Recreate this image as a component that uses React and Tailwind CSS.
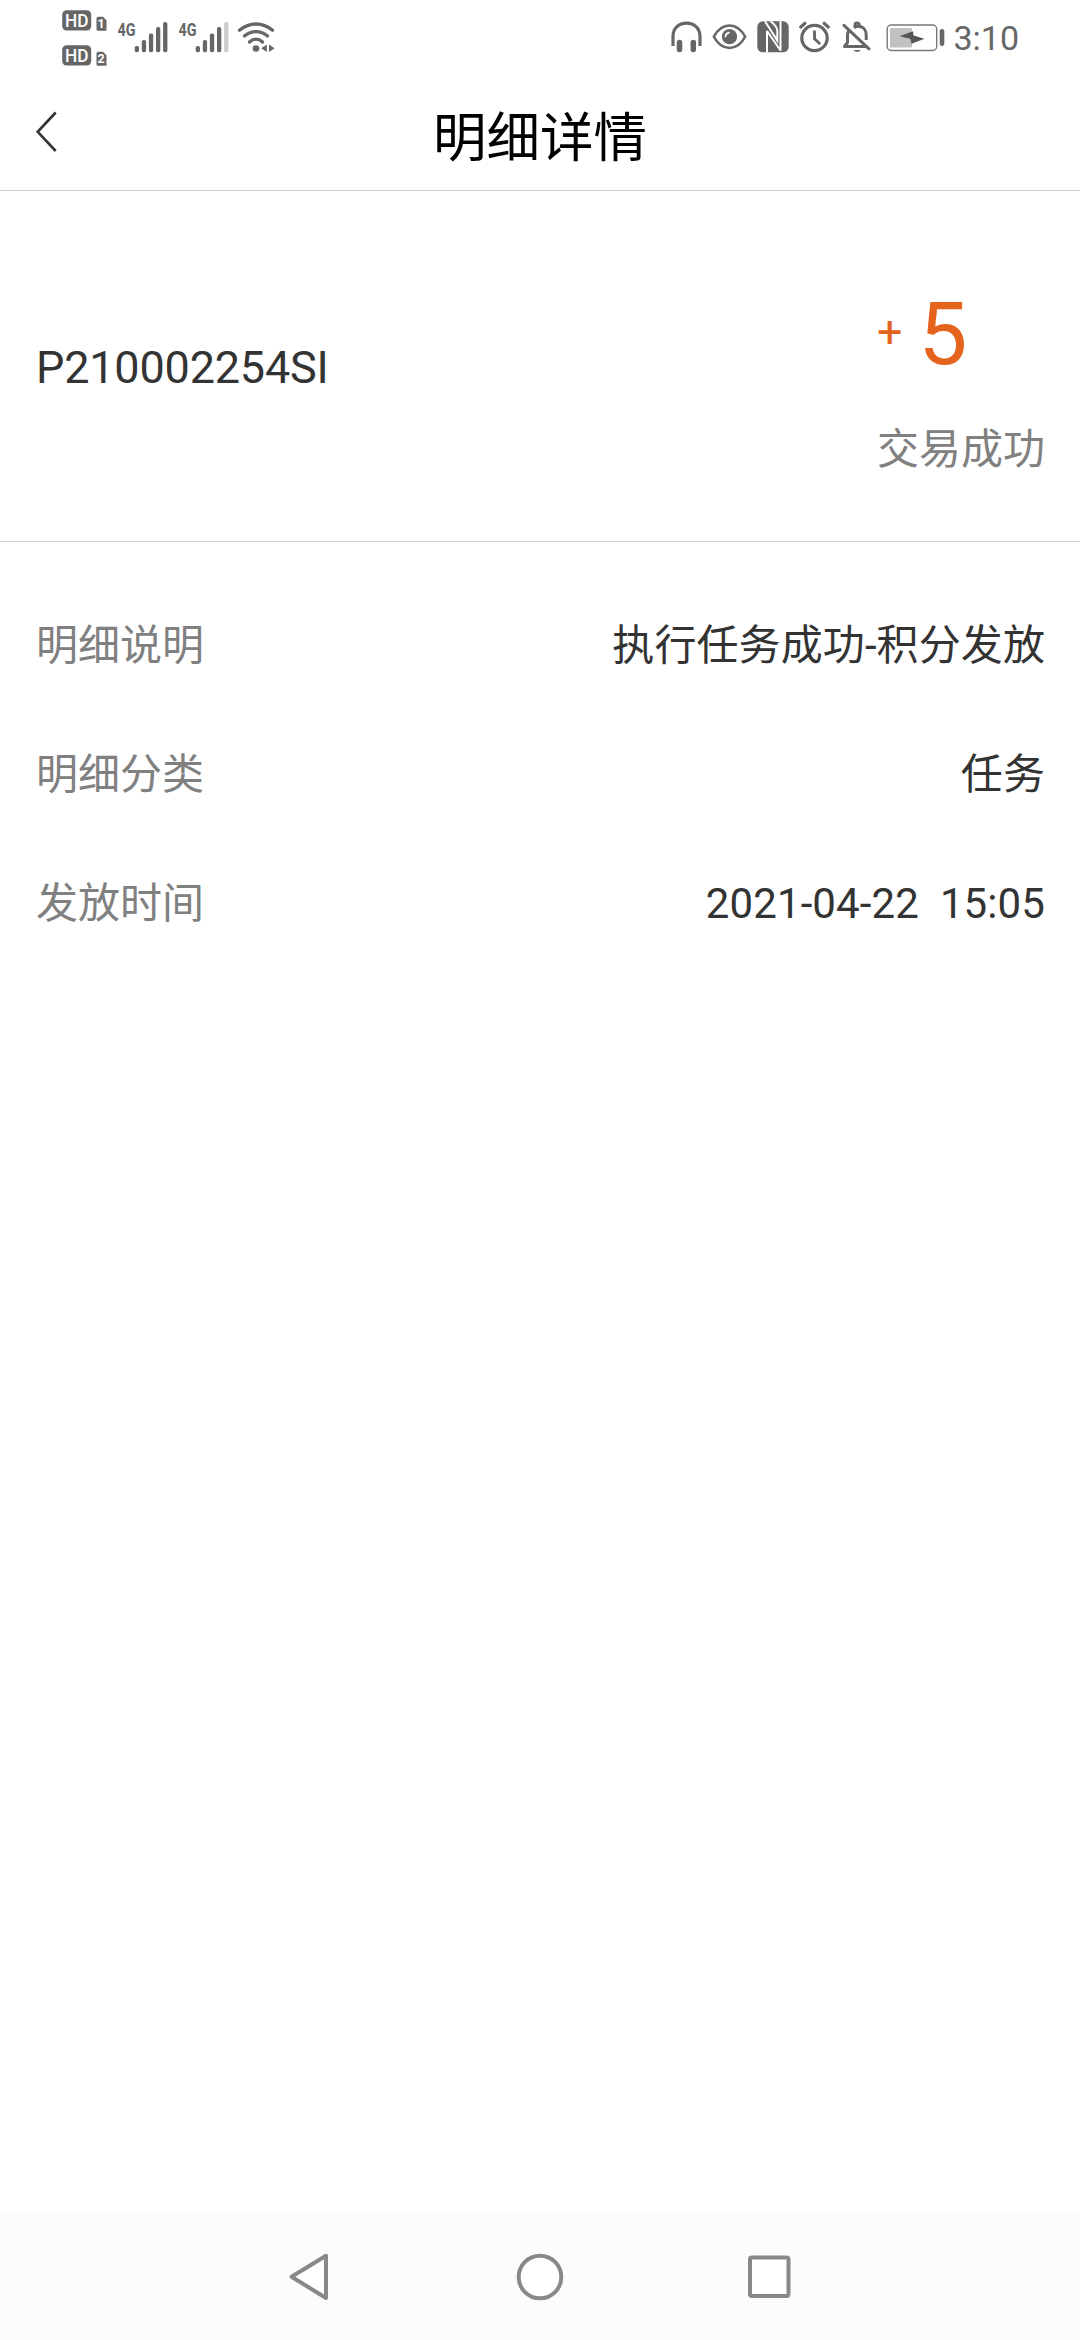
const rows = [
  { label: "明细说明", value: "执行任务成功-积分发放" },
  { label: "明细分类", value: "任务" },
  { label: "发放时间", value: "2021-04-22  15:05" }
];

export default function App() {
  return (
    <div className="flex h-[2340px] w-[1080px] flex-col overflow-hidden bg-white font-[Roboto,'Noto_Sans_CJK_SC',sans-serif] text-[#333333]">
      <StatusBar />
      <Header title="明细详情" />
      <Summary />
      <section className="flex flex-1 flex-col pt-[39px]">
        {rows.map((row) => (
          <div
            key={row.label}
            className="flex h-[129px] items-center justify-between pr-[35px] pl-9 text-[42px] leading-none"
          >
            <span className="text-[#808080]">{row.label}</span>
            <span className="whitespace-pre last:tracking-[0.1px]">{row.value}</span>
          </div>
        ))}
      </section>
      <NavBar />
    </div>
  );
}

function StatusBar() {
  return (
    <div className="flex h-[74px] shrink-0 items-start justify-between pr-[61px] pl-[62px] text-[#666666]">
      <div className="flex items-start">
        <div className="flex flex-col gap-[14px] pt-[10px]">
          <HdBadge sim="1" />
          <HdBadge sim="2" />
        </div>
        <Signal strength={5} className="ml-[10px]" />
        <Signal strength={4} className="ml-[7px]" />
        <WifiIcon />
      </div>
      <div className="flex items-start">
        <HeadphonesIcon />
        <EyeIcon />
        <NfcIcon />
        <AlarmIcon />
        <BellOffIcon />
        <BatteryIcon />
        <span className="mt-[18px] ml-[7px] text-[34px] leading-[40px]">3:10</span>
      </div>
    </div>
  );
}

function HdBadge({ sim }) {
  return (
    <svg width="46" height="21" viewBox="0 0 46 21" className="font-[Roboto,sans-serif]">
      <rect x="0.2" y="0.2" width="29" height="20.3" rx="4.5" fill="currentColor" />
      <text x="14.8" y="16.8" textAnchor="middle" fontSize="18" fontWeight="500" fill="#fff" textLength="23.5" lengthAdjust="spacingAndGlyphs">
        HD
      </text>
      <path d="M36 6.700h5l3.500 3.500v10.500h-8.500q-1.500 0-1.500-1.500v-11q0-1.500 1.500-1.500z" fill="currentColor" />
      <text x="39.2" y="18.2" textAnchor="middle" fontSize="12.5" fontWeight="700" fill="#fff">
        {sim}
      </text>
    </svg>
  );
}

function Signal({ strength, className }) {
  const tops = [46, 40, 33.5, 27, 22];
  return (
    <svg width="54" height="56" viewBox="0 0 54 56" className={className}>
      <text x="-0.5" y="35.5" fontSize="19" fontWeight="700" fill="currentColor" textLength="18" lengthAdjust="spacingAndGlyphs">
        4G
      </text>
      {tops.map((top, i) => (
        <rect
          key={top}
          x={16.7 + i * 7.1}
          y={top}
          width="4.3"
          height={52.3 - top}
          rx="1.8"
          fill={i < strength ? "currentColor" : "#cccccc"}
        />
      ))}
    </svg>
  );
}

function WifiIcon() {
  return (
    <svg width="40" height="56" viewBox="0 0 40 56" className="ml-[4px]" fill="none" stroke="currentColor" strokeWidth="3.3" strokeLinecap="round">
      <path d="M2.500 30.300Q10 24 19 24T35.500 30.300" />
      <path d="M7.500 36Q12.500 31.700 19 31.700T30.500 36" />
      <path d="M12.500 42Q15.500 39.200 19 39.200T25.500 42" />
      <circle cx="19" cy="48.5" r="3.3" fill="currentColor" stroke="none" />
      <path d="M29.800 44.500v7.500l-5.600-3.700z M32 44.500v7.500l5.600-3.700z" fill="currentColor" stroke="none" />
    </svg>
  );
}

function HeadphonesIcon() {
  return (
    <svg width="31" height="56" viewBox="0 0 31 56" fill="none" stroke="currentColor">
      <path d="M2 46V36.500C2 28 8 23.200 15.500 23.200S29 28 29 36.500V46" strokeWidth="3.2" />
      <path d="M8.500 42.500v7M22.300 42.500v7" strokeWidth="5.5" strokeLinecap="round" />
    </svg>
  );
}

function EyeIcon() {
  return (
    <svg width="35" height="56" viewBox="0 0 35 56" className="ml-[10px]">
      <path d="M1.800 36.700C6 29 11.500 25.500 17.500 25.500S29 29 33.200 36.700C29 44.500 23.500 48 17.500 48S6 44.500 1.800 36.700z" fill="none" stroke="currentColor" strokeWidth="2.5" strokeLinejoin="round" />
      <circle cx="17.5" cy="36.7" r="7.6" fill="currentColor" />
      <path d="M13.500 36.500Q13.900 33 17 32.600" fill="none" stroke="#fff" strokeWidth="1.7" strokeLinecap="round" />
    </svg>
  );
}

function NfcIcon() {
  return (
    <svg width="32" height="56" viewBox="0 0 32 56" className="ml-[10px]">
      <rect x="0.3" y="21.3" width="31.4" height="31" rx="5.5" fill="currentColor" />
      <g fill="none" stroke="#fff" strokeWidth="2">
        <path d="M8 21.300L20.300 40.500V31Q20 26 13.500 21.300" />
        <path d="M23.500 21.300V50.500L10 31V52.300" strokeLinejoin="bevel" />
      </g>
    </svg>
  );
}

function AlarmIcon() {
  return (
    <svg width="31" height="56" viewBox="0 0 31 56" className="ml-[10px]" fill="none" stroke="currentColor" strokeWidth="3.2" strokeLinecap="round">
      <circle cx="15.5" cy="38" r="12.7" />
      <path d="M15.500 31.800v7l4.800 4.400" strokeWidth="2.9" strokeLinejoin="round" />
      <path d="M1.800 27l4-3.700M29.200 27l-4-3.700" />
    </svg>
  );
}

function BellOffIcon() {
  return (
    <svg width="30" height="56" viewBox="0 0 30 56" className="ml-[12px]" fill="none" stroke="currentColor" strokeWidth="3">
      <path d="M12.200 28Q14 26.300 15.800 26.300C21.500 26.300 24.200 30.500 24.200 35V40" />
      <path d="M6.500 31Q5.500 33 5.500 36v6.500L2.500 46.500H24" strokeLinejoin="round" />
      <path d="M13 26.500v-2q0-1.500 2-1.500t2 1.500v2" />
      <path d="M11.500 50Q15.300 54 18.800 50z" fill="currentColor" stroke="none" />
      <path d="M2 25.300l25 23.500" strokeLinecap="round" />
    </svg>
  );
}

function BatteryIcon() {
  return (
    <svg width="60" height="56" viewBox="0 0 60 56" className="ml-[14px]">
      <rect x="1.2" y="25" width="49.5" height="25.5" rx="4" fill="none" stroke="#777777" strokeWidth="1.4" />
      <rect x="4" y="28" width="22" height="19.5" rx="1" fill="#c1c1c1" />
      <path d="M13.500 36.300L27 31.300l0.500 4.200 11 3.200L25.500 43.700l-1.200-5z" fill="#555555" />
      <rect x="53.7" y="29" width="4.6" height="17" rx="2.3" fill="currentColor" />
    </svg>
  );
}

function Header({ title }) {
  return (
    <header className="grid h-[117px] shrink-0 grid-cols-[1fr_auto_1fr] items-center border-b border-[#cccccc]">
      <button type="button" aria-label="返回" className="pl-[35px]">
        <svg width="24" height="42" viewBox="0 0 24 42" fill="none" stroke="#333333" strokeWidth="2.6">
          <path d="M20.700 1.500L2.700 20.800 20.700 40" />
        </svg>
      </button>
      <h1 className="pt-[13px] text-[53.5px] leading-none text-black">{title}</h1>
    </header>
  );
}

function Summary() {
  return (
    <section className="flex h-[351px] shrink-0 items-center justify-between border-b border-[#cccccc] pr-[35px] pl-9">
      <h2 className="pt-[3px] text-[45px] leading-none tracking-[-0.2px]">P210002254SI</h2>
      <div className="flex w-[168px] flex-col pt-[30px]">
        <p className="flex items-center leading-none text-[#e4641e]">
          <span className="pb-[7px] text-[45px]">+</span>
          <span className="ml-[16px] text-[87px]">5</span>
        </p>
        <p className="mt-[51px] text-[42px] leading-none text-[#808080]">交易成功</p>
      </div>
    </section>
  );
}

function NavBar() {
  return (
    <nav className="flex h-[126px] shrink-0 items-center justify-center gap-[182px] bg-[#fcfcfc]">
      <svg width="48" height="48" viewBox="0 0 48 48" fill="#fff" stroke="#888888" strokeWidth="4" strokeLinejoin="round">
        <path d="M40 2.700L5.500 23.800 40 45z" />
      </svg>
      <svg width="48" height="48" viewBox="0 0 48 48" fill="#fff" stroke="#888888" strokeWidth="4">
        <circle cx="24" cy="24" r="21.3" />
      </svg>
      <svg width="48" height="48" viewBox="0 0 48 48" fill="#fff" stroke="#888888" strokeWidth="4">
        <rect x="4" y="4.5" width="38.5" height="38.5" rx="2" />
      </svg>
    </nav>
  );
}
